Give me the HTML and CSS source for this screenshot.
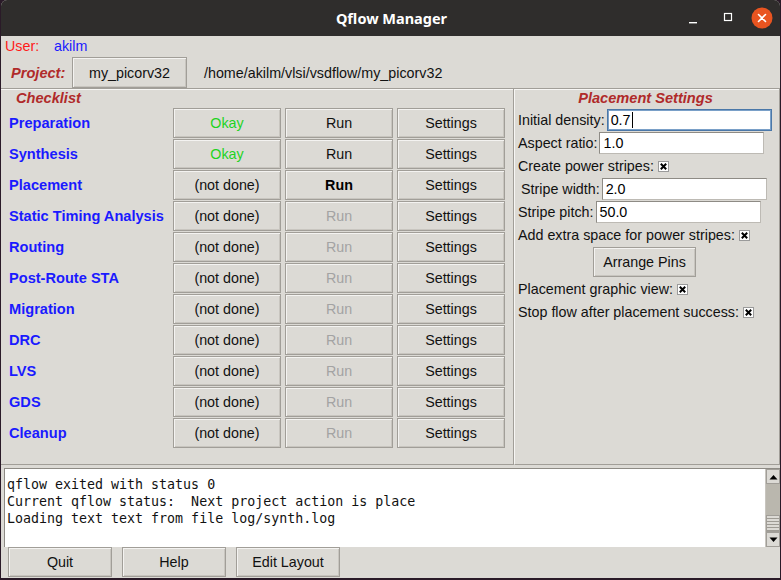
FILE: index.html
```html
<!DOCTYPE html>
<html>
<head>
<meta charset="utf-8">
<link rel="stylesheet" href="styles.css">
</head>
<body>
<div class="window">
  <div class="titlebar">
    <div class="title">Qflow Manager</div>
    <div class="wm-buttons">
      <svg class="wm-min" width="12" height="12" viewBox="0 0 12 12"><rect x="1" y="9" width="8" height="1.4" fill="#fff"/></svg>
      <svg class="wm-max" width="12" height="12" viewBox="0 0 12 12"><rect x="2.5" y="1.5" width="7" height="7" fill="none" stroke="#fff" stroke-width="1.2"/></svg>
      <svg class="wm-close" width="22" height="22" viewBox="0 0 22 22"><circle cx="11" cy="11" r="10.5" fill="#e95420"/><path d="M7.5 7.5 L14.5 14.5 M14.5 7.5 L7.5 14.5" stroke="#fff" stroke-width="1.6" stroke-linecap="round"/></svg>
    </div>
  </div>
  <div class="content">
    <div class="user-row"><span class="user-label">User:</span><span class="user-name">akilm</span></div>
    <div class="project-row">
      <span class="project-label">Project:</span>
      <div class="btn project-btn">my_picorv32</div>
      <span class="path">/home/akilm/vlsi/vsdflow/my_picorv32</span>
    </div>
    <div class="panels">
      <div class="checklist">
        <div class="section-title checklist-title">Checklist</div>
        <div class="row"><span class="step">Preparation</span><div class="btn ok">Okay</div><div class="btn">Run</div><div class="btn">Settings</div></div>
        <div class="row"><span class="step">Synthesis</span><div class="btn ok">Okay</div><div class="btn">Run</div><div class="btn">Settings</div></div>
        <div class="row"><span class="step">Placement</span><div class="btn">(not done)</div><div class="btn bold">Run</div><div class="btn">Settings</div></div>
        <div class="row"><span class="step">Static Timing Analysis</span><div class="btn">(not done)</div><div class="btn disabled">Run</div><div class="btn">Settings</div></div>
        <div class="row"><span class="step">Routing</span><div class="btn">(not done)</div><div class="btn disabled">Run</div><div class="btn">Settings</div></div>
        <div class="row"><span class="step">Post-Route STA</span><div class="btn">(not done)</div><div class="btn disabled">Run</div><div class="btn">Settings</div></div>
        <div class="row"><span class="step">Migration</span><div class="btn">(not done)</div><div class="btn disabled">Run</div><div class="btn">Settings</div></div>
        <div class="row"><span class="step">DRC</span><div class="btn">(not done)</div><div class="btn disabled">Run</div><div class="btn">Settings</div></div>
        <div class="row"><span class="step">LVS</span><div class="btn">(not done)</div><div class="btn disabled">Run</div><div class="btn">Settings</div></div>
        <div class="row"><span class="step">GDS</span><div class="btn">(not done)</div><div class="btn disabled">Run</div><div class="btn">Settings</div></div>
        <div class="row"><span class="step">Cleanup</span><div class="btn">(not done)</div><div class="btn disabled">Run</div><div class="btn">Settings</div></div>
      </div>
      <div class="settings">
        <div class="section-title settings-title">Placement Settings</div>
        <div class="field"><span>Initial density:</span><div class="entry focus">0.7<span class="caret"></span></div></div>
        <div class="field"><span>Aspect ratio:</span><div class="entry">1.0</div></div>
        <div class="check"><span>Create power stripes:</span><svg class="cb" width="11" height="11" viewBox="0 0 11 11"><rect x="0.5" y="0.5" width="10" height="10" fill="#fff" stroke="#9a9a9a"/><path d="M2.8 2.8 L8.2 8.2 M8.2 2.8 L2.8 8.2" stroke="#000" stroke-width="2"/></svg></div>
        <div class="field"><span class="indent">Stripe width:</span><div class="entry">2.0</div></div>
        <div class="field"><span>Stripe pitch:</span><div class="entry">50.0</div></div>
        <div class="check"><span>Add extra space for power stripes:</span><svg class="cb" width="11" height="11" viewBox="0 0 11 11"><rect x="0.5" y="0.5" width="10" height="10" fill="#fff" stroke="#9a9a9a"/><path d="M2.8 2.8 L8.2 8.2 M8.2 2.8 L2.8 8.2" stroke="#000" stroke-width="2"/></svg></div>
        <div class="center-row"><div class="btn arrange">Arrange Pins</div></div>
        <div class="check"><span>Placement graphic view:</span><svg class="cb" width="11" height="11" viewBox="0 0 11 11"><rect x="0.5" y="0.5" width="10" height="10" fill="#fff" stroke="#9a9a9a"/><path d="M2.8 2.8 L8.2 8.2 M8.2 2.8 L2.8 8.2" stroke="#000" stroke-width="2"/></svg></div>
        <div class="check"><span>Stop flow after placement success:</span><svg class="cb" width="11" height="11" viewBox="0 0 11 11"><rect x="0.5" y="0.5" width="10" height="10" fill="#fff" stroke="#9a9a9a"/><path d="M2.8 2.8 L8.2 8.2 M8.2 2.8 L2.8 8.2" stroke="#000" stroke-width="2"/></svg></div>
      </div>
    </div>
    <div class="log">
      <div class="log-text">qflow exited with status 0
Current qflow status:  Next project action is place
Loading text text from file log/synth.log</div>
      <div class="scrollbar">
        <div class="sb-arrow"><svg width="9" height="6" viewBox="0 0 9 6"><path d="M0.5 5.5 L4.5 1 L8.5 5.5 Z" fill="#000"/></svg></div>
        <div class="sb-thumb"><div class="grip"></div></div>
        <div class="sb-arrow"><svg width="9" height="6" viewBox="0 0 9 6"><path d="M0.5 0.5 L4.5 5 L8.5 0.5 Z" fill="#000"/></svg></div>
      </div>
    </div>
    <div class="bottom-buttons">
      <div class="btn bottom">Quit</div>
      <div class="btn bottom">Help</div>
      <div class="btn bottom">Edit Layout</div>
    </div>
  </div>
</div>
</body>
</html>
```
FILE: styles.css
```css
html, body {
  margin: 0;
  padding: 0;
  background: #2a1a28;
}
body {
  width: 781px;
  height: 580px;
  overflow: hidden;
  font-family: "Liberation Sans", Arial, sans-serif;
  font-size: 14.3px;
  color: #000;
}
.window {
  width: 779px;
  height: 578px;
  margin-left: 1px;
  background: #dcdad5;
  display: flex;
  flex-direction: column;
  border-radius: 6px 6px 0 0;
  overflow: hidden;
}
.titlebar {
  height: 36px;
  flex: none;
  background: #2f2d2c;
  position: relative;
  display: flex;
  align-items: center;
  justify-content: center;
}
.title {
  color: #fff;
  font-weight: bold;
  font-size: 14.5px;
  font-family: "Noto Sans", "Liberation Sans", sans-serif;
  margin-left: 2px;
}
.wm-buttons {
  position: absolute;
  right: 7px;
  top: 7px;
  display: flex;
  align-items: center;
  gap: 0;
}
.wm-min { margin-right: 22px; margin-top: 2px; }
.wm-max { margin-right: 17px; }
.content {
  flex: 1;
  display: flex;
  flex-direction: column;
}
.user-row {
  height: 20px;
  display: flex;
  align-items: center;
  padding-left: 4px;
}
.user-label { color: #ff1a1a; width: 49px; }
.user-name { color: #1a1aff; }
.project-row {
  height: 31px;
  margin-top: 1px;
  display: flex;
  align-items: center;
}
.project-label {
  color: #b02a2a;
  font-weight: bold;
  font-style: italic;
  font-size: 14.6px;
  margin-left: 10px;
  width: 61px;
}
.btn {
  box-sizing: border-box;
  background: #dcdad5;
  border: 1px solid #a19e98;
  box-shadow: inset 1px 1px 0 #f4f3f1, inset -1px -1px 0 #c8c5bf;
  display: flex;
  align-items: center;
  justify-content: center;
  color: #111;
  white-space: nowrap;
}
.project-btn {
  width: 115px;
  height: 31px;
}
.path { margin-left: 17px; color: #111; }
.panels {
  height: 376px;
  display: flex;
  border-top: 1px solid #a19e98;
  box-shadow: inset 0 1px 0 #f7f6f4;
}
.checklist {
  width: 513px;
  box-sizing: border-box;
  border-right: 1px solid #a19e98;
  display: flex;
  flex-direction: column;
  border-bottom: 1px solid #a19e98;
}
.section-title {
  color: #b02a2a;
  font-weight: bold;
  font-style: italic;
  font-size: 14.6px;
  height: 19px;
  line-height: 19px;
}
.checklist-title { padding-left: 15px; }
.row {
  display: flex;
  align-items: flex-start;
  height: 31px;
}
.step {
  width: 164px;
  padding-left: 8px;
  color: #1a1aff;
  font-weight: bold;
  font-size: 14.6px;
  line-height: 30px;
}
.row .btn {
  width: 108px;
  height: 30px;
  margin-right: 4px;
}
.btn.ok { color: #1fd31f; }
.btn.bold { font-weight: bold; color: #000; }
.btn.disabled { color: #a3a3a3; }
.settings {
  flex: 1;
  border-left: 1px solid #f7f6f4;
  border-right: 1px solid #a19e98;
  border-bottom: 1px solid #a19e98;
  display: flex;
  flex-direction: column;
  padding-left: 3px;
}
.settings-title { text-align: center; padding-right: 6px; }
.field {
  display: flex;
  align-items: center;
  height: 23px;
  color: #111;
}
.field span { margin-right: 2px; }
.indent { padding-left: 3px; }
.entry {
  box-sizing: border-box;
  width: 165px;
  height: 22px;
  background: #fff;
  border: 1px solid #bdbab4;
  border-top-color: #8e8b85;
  border-left-color: #8e8b85;
  padding-left: 3px;
  display: flex;
  align-items: center;
  color: #000;
}
.entry.focus {
  border: 1px solid #4a77a8;
  box-shadow: inset 0 0 0 1px #7aa0c8;
}
.caret {
  display: inline-block;
  width: 1px;
  height: 16px;
  background: #000;
  margin-left: 1px;
}
.check {
  display: flex;
  align-items: center;
  height: 23px;
  color: #111;
}
.check .cb { margin-left: 4px; margin-top: 2px; }
.center-row {
  display: flex;
  justify-content: center;
  padding-right: 8px;
  margin-top: 1px;
}
.arrange {
  width: 103px;
  height: 30px;
}
.log {
  margin: 3px 0 0 3px;
  height: 78px;
  display: flex;
  border-top: 1px solid #8e8b85;
  border-left: 1px solid #8e8b85;
}
.log-text {
  width: 760px;
  box-sizing: border-box;
  background: #fff;
  font-family: "DejaVu Sans Mono", monospace;
  font-size: 13.3px;
  line-height: 17px;
  padding: 7px 0 0 2px;
  white-space: pre;
  overflow: hidden;
  color: #111;
}
.scrollbar {
  width: 14px;
  display: flex;
  flex-direction: column;
  border-left: 1px solid #c8c5bf;
  background: #bab7ae;
}
.sb-arrow {
  height: 15px;
  box-sizing: border-box;
  background: #dcdad5;
  border: 1px solid #a19e98;
  display: flex;
  align-items: center;
  justify-content: center;
}
.sb-thumb {
  flex: 1;
  display: flex;
  flex-direction: column;
  justify-content: flex-end;
}
.grip {
  height: 15px;
  background: repeating-linear-gradient(to bottom, #dcdad5 0 2px, #9e9b94 2px 3px);
  border: 1px solid #a19e98;
}
.bottom-buttons {
  display: flex;
  gap: 10px;
  padding-left: 7px;
}
.btn.bottom {
  width: 104px;
  height: 30px;
}
```
